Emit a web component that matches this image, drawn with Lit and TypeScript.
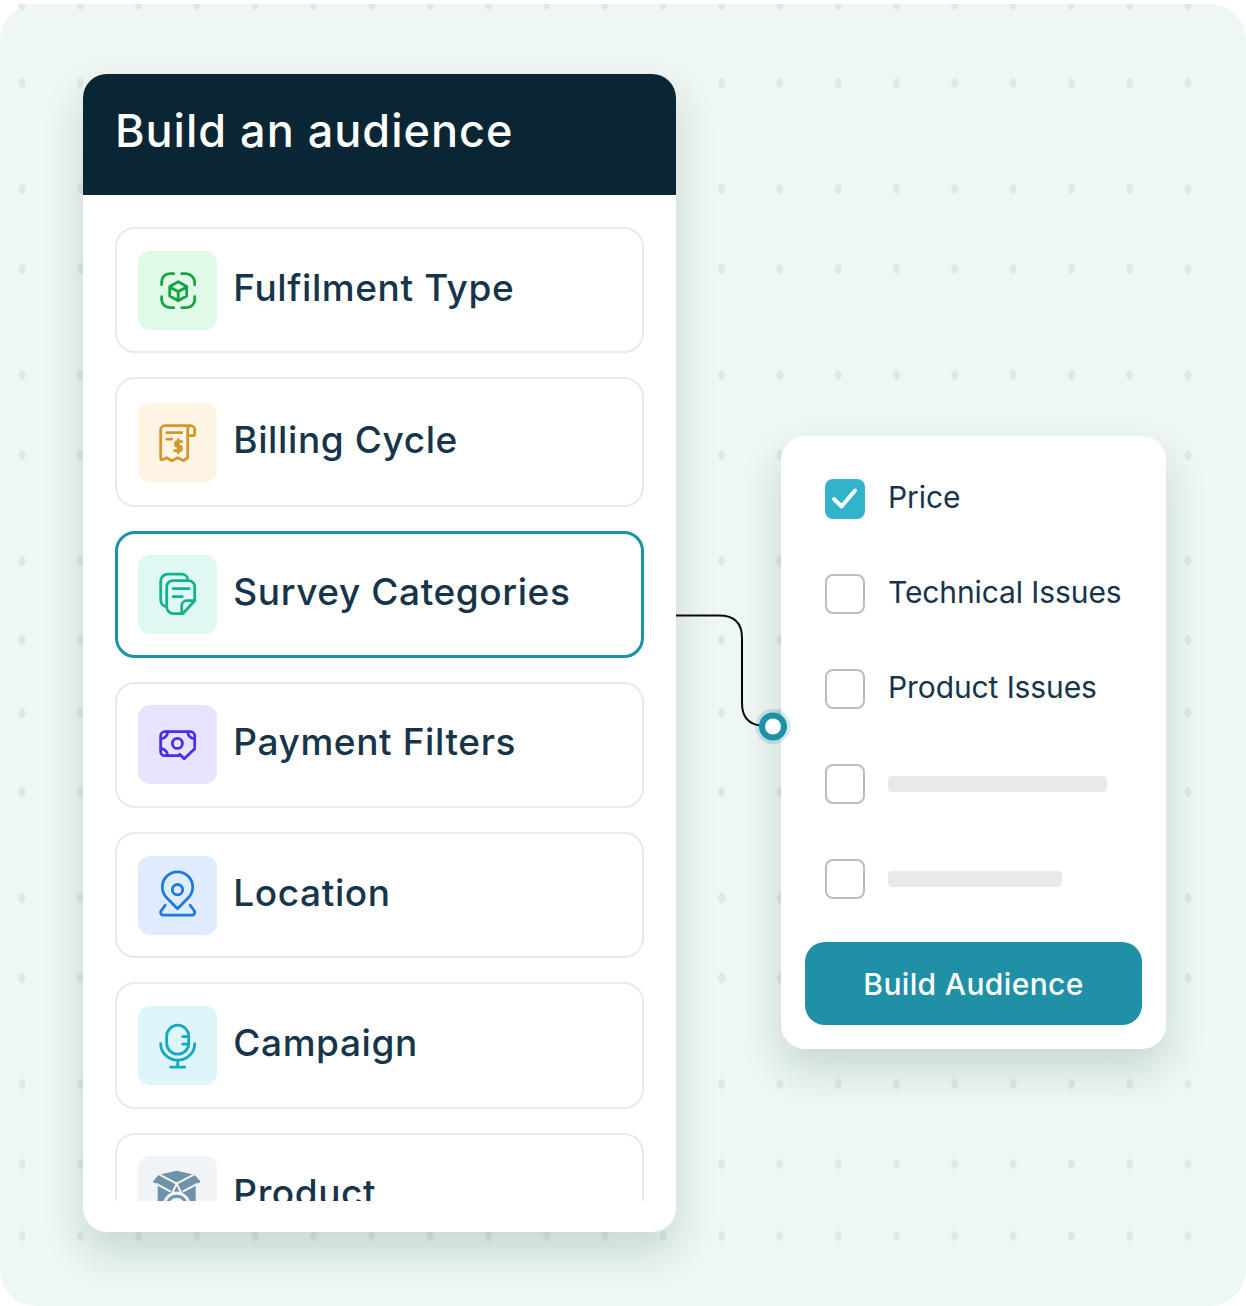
import { LitElement, html, css, svg } from 'lit';
import { customElement } from 'lit/decorators.js';
import { classMap } from 'lit/directives/class-map.js';

// rows of the dot grid are not evenly spaced in the artwork
const DOT_ROWS = [1, 79, 185, 265, 371, 451, 557, 636, 709, 788, 894, 974, 1080, 1160, 1232];
const DOT_COLS = Array.from({ length: 21 }, (_, i) => 22 + i * 58.3);

const icons = {
  box: svg`<g fill="none" stroke="#12a63f" stroke-width="2.800" stroke-linecap="round" stroke-linejoin="round">
    <path d="M23 33v-3a8 8 0 0 1 8-8h4M43 22h4a9 9 0 0 1 9 8v3M56 45v3a8 8 0 0 1-8 8h-5M35 56h-4a8 8 0 0 1-8-8v-3"/>
    <path d="M39.500 30l8.500 4.800v9.600L39.500 49 31 44.400v-9.600zM31 35l8.500 5 8.500-5M39.500 40v9"/></g>`,
  receipt: svg`<g fill="none" stroke="#d3962a" stroke-width="2.800" stroke-linecap="round" stroke-linejoin="round">
    <path d="M52 22H26a4 4 0 0 0-4 4v28c0 2 1 2.500 2.500 1.800L28 54l5 3 6-3 6 3 4-3V27c0-3 1-5 3-5a4 4 0 0 1 4 4v4c0 1.500-1 2-2 2h-5"/>
    <path d="M28 29h15M28 35.500h5M43 38h-4a2.200 2.200 0 0 0 0 4.500h1.500a2.200 2.200 0 0 1 0 4.500H36M39.500 36v13"/></g>`,
  notes: svg`<g fill="none" stroke="#16b08f" stroke-width="2.800" stroke-linecap="round" stroke-linejoin="round">
    <path d="M49 24a6 6 0 0 0-6-5.500H29a7 7 0 0 0-7 7V44a7 7 0 0 0 6 7"/>
    <path d="M34 25h16a6 6 0 0 1 6 6v14L44 58h-9a7 7 0 0 1-7-7V31a6 6 0 0 1 6-6z"/>
    <path d="M56 45h-8a5 5 0 0 0-5 5v8M34.500 33h16M34.500 41h9"/></g>`,
  money: svg`<g fill="none" stroke="#4431e8" stroke-width="2.800" stroke-linecap="round" stroke-linejoin="round">
    <path d="M56 41V30a4 4 0 0 0-4-4H26a4 4 0 0 0-4 4v16a4 4 0 0 0 4 4h14"/>
    <circle cx="38.700" cy="37.700" r="5"/>
    <path d="M22 33a7 7 0 0 0 7-7M49 26a7 7 0 0 0 7 7M22 43a7 7 0 0 1 7 7M41 48.500l4.500 4.500 10.500-10"/></g>`,
  pin: svg`<g fill="none" stroke="#1e78de" stroke-width="2.800" stroke-linecap="round" stroke-linejoin="round">
    <path d="M38.800 52L28 41a15.200 15.200 0 1 1 21.600 0z"/>
    <circle cx="38.800" cy="33" r="5.200"/>
    <path d="M26.500 48.500l-4 5.500a2.800 2.800 0 0 0 2.500 4.500h28a2.800 2.800 0 0 0 2.500-4.500l-4-5.500"/></g>`,
  mic: svg`<g fill="none" stroke="#14a8c4" stroke-width="2.800" stroke-linecap="round" stroke-linejoin="round">
    <rect x="28" y="18.500" width="22" height="29" rx="11"/>
    <path d="M50 30h-6M50 37.500h-6M22 37a17 16.500 0 0 0 34 0M39 54v6M32 60.500h14"/></g>`,
  product: svg`<path fill="#7092a8" d="M38 14l18 4 6 7-5 3v24H19V28l-5-3 6-7z"/>
    <path fill="none" stroke="#f1f4f7" stroke-width="2" d="M19 17l19 10 19-10M17 27l15 8M59 27l-15 8M38 27l-4.500 9h9z"/>
    <circle cx="38" cy="49" r="14" fill="#f1f4f7"/>
    <circle cx="38" cy="49" r="11" fill="#7092a8"/>
    <circle cx="38" cy="49" r="8" fill="#f1f4f7"/>`,
};

const filters = [
  { label: 'Fulfilment Type', icon: icons.box, tint: '#e1f9e9' },
  { label: 'Billing Cycle', icon: icons.receipt, tint: '#fdf4e3', tall: true },
  { label: 'Survey Categories', icon: icons.notes, tint: '#e0f8f3', active: true },
  { label: 'Payment Filters', icon: icons.money, tint: '#e8e4ff' },
  { label: 'Location', icon: icons.pin, tint: '#deecfd' },
  { label: 'Campaign', icon: icons.mic, tint: '#def5fa' },
  { label: 'Product', icon: icons.product, tint: '#f1f4f7' },
];

const options = [
  { label: 'Price', checked: true },
  { label: 'Technical Issues' },
  { label: 'Product Issues' },
  { bar: 219 },
  { bar: 174 },
];

@customElement('app-root')
export class AppRoot extends LitElement {
  static styles = css`
    :host {
      display: block;
      width: 1246px;
      height: 1306px;
      font-family: 'Inter', sans-serif;
      color: #16344a;
    }

    .stage {
      position: relative;
      box-sizing: border-box;
      height: 1302px;
      margin-top: 4px;
      padding: 70px 0 0 83px;
      display: flex;
      align-items: flex-start;
      gap: 105px;
      background: #eef7f2;
      border-radius: 36px;
    }

    .dots {
      position: absolute;
      left: 0;
      top: 0;
      width: 1246px;
      height: 1302px;
      fill: #dfe8e4;
    }

    .card {
      position: relative;
      width: 593px;
      height: 1158px;
      background: #fff;
      border-radius: 24px;
      overflow: hidden;
      flex: none;
    }

    .shadow {
      box-shadow: 0 20px 40px rgba(20, 60, 50, 0.17);
    }

    .header {
      height: 121px;
      box-sizing: border-box;
      padding: 0 32px 8px;
      display: flex;
      align-items: center;
      background: #0a2533;
      color: #fff;
      font-size: 45px;
      font-weight: 500;
      letter-spacing: 1px;
    }

    .list {
      height: 1006px;
      box-sizing: border-box;
      padding: 32px 32px 0;
      overflow: hidden;
      display: flex;
      flex-direction: column;
      gap: 24px;
    }

    .row {
      box-sizing: border-box;
      height: 126.3px;
      flex: none;
      display: flex;
      align-items: center;
      gap: 16px;
      padding-left: 21.3px;
      border: 2px solid #e9e9e9;
      border-radius: 20px;
      font-size: 37px;
      font-weight: 500;
      letter-spacing: 0.6px;
    }

    .row.tall {
      height: 130px;
    }

    .row.active {
      height: 126.4px;
      padding-left: 20.3px;
      border: 3px solid #1f91a6;
    }

    .row span {
      position: relative;
      top: -3px;
    }

    .tile {
      width: 79px;
      height: 79px;
      flex: none;
      border-radius: 12px;
    }

    .tile svg {
      display: block;
    }

    .panel {
      position: relative;
      width: 385px;
      margin-top: 362px;
      box-sizing: border-box;
      padding: 43px 24px 24px;
      background: #fff;
      border-radius: 24px;
      flex: none;
    }

    .options {
      display: flex;
      flex-direction: column;
      gap: 55px;
      padding-left: 20px;
    }

    .option {
      height: 40px;
      display: flex;
      align-items: center;
      gap: 23.5px;
      font-size: 30px;
      letter-spacing: -0.1px;
    }

    .option span {
      position: relative;
      top: -2px;
    }

    .box {
      box-sizing: border-box;
      width: 39.5px;
      height: 40px;
      flex: none;
      border: 2px solid #bdbdbd;
      border-radius: 8px;
    }

    .box.on {
      border: none;
      background: #31b3c9;
    }

    .box svg {
      display: block;
    }

    .bar {
      height: 16px;
      background: #e9e9e9;
      border-radius: 4px;
    }

    .build {
      display: block;
      width: 100%;
      height: 83px;
      margin-top: 43px;
      padding: 0;
      border: none;
      border-radius: 20px;
      background: #2090a6;
      color: #fff;
      font: 500 30px 'Inter', sans-serif;
      letter-spacing: 0.35px;
    }

    .wire {
      position: absolute;
      left: 0;
      top: 0;
      width: 1246px;
      height: 1302px;
      pointer-events: none;
    }
  `;

  render() {
    return html`
      <div class="stage">
        <svg class="dots" viewBox="0 0 1246 1302">
          ${DOT_ROWS.map((y) =>
            DOT_COLS.map(
              (x) => svg`<path transform="translate(${x} ${y})" d="M0-5.500Q3.500-3 3.500 0 3.500 3 0 5.500-3.500 3-3.500 0-3.500-3 0-5.500z"/>`
            )
          )}
        </svg>
        <section class="card shadow">
          <div class="header">Build an audience</div>
          <div class="list">
            ${filters.map(
              (f) => html`
                <div class=${classMap({ row: true, tall: !!f.tall, active: !!f.active })}>
                  <div class="tile" style="background:${f.tint}">
                    <svg width="79" height="79" viewBox="-0.7 -0.7 79 79">${f.icon}</svg>
                  </div>
                  <span>${f.label}</span>
                </div>
              `
            )}
          </div>
        </section>
        <section class="panel shadow">
          <div class="options">
            ${options.map(
              (o) => html`
                <div class="option">
                  <div class=${classMap({ box: true, on: !!o.checked })}>
                    ${o.checked
                      ? html`<svg width="40" height="40" viewBox="0 0 40 40"><path d="M9 20l7.500 7.500L30 11.500" fill="none" stroke="#fff" stroke-width="4" stroke-linecap="round" stroke-linejoin="round"/></svg>`
                      : ''}
                  </div>
                  ${o.label
                    ? html`<span>${o.label}</span>`
                    : html`<div class="bar" style="width:${o.bar}px"></div>`}
                </div>
              `
            )}
          </div>
          <button class="build">Build Audience</button>
        </section>
        <svg class="wire" viewBox="0 0 1246 1302">
          <path d="M676 611.500H719C734 611.500 742 619 742 634V699C742 713 749 720 760 721.500" fill="none" stroke="#0a0a0a" stroke-width="2"/>
          <circle cx="773" cy="722.500" r="17.500" fill="#1f91a6" fill-opacity="0.2"/>
          <circle cx="773" cy="722.500" r="11" fill="#fff" stroke="#1f91a6" stroke-width="6"/>
        </svg>
      </div>
    `;
  }
}
